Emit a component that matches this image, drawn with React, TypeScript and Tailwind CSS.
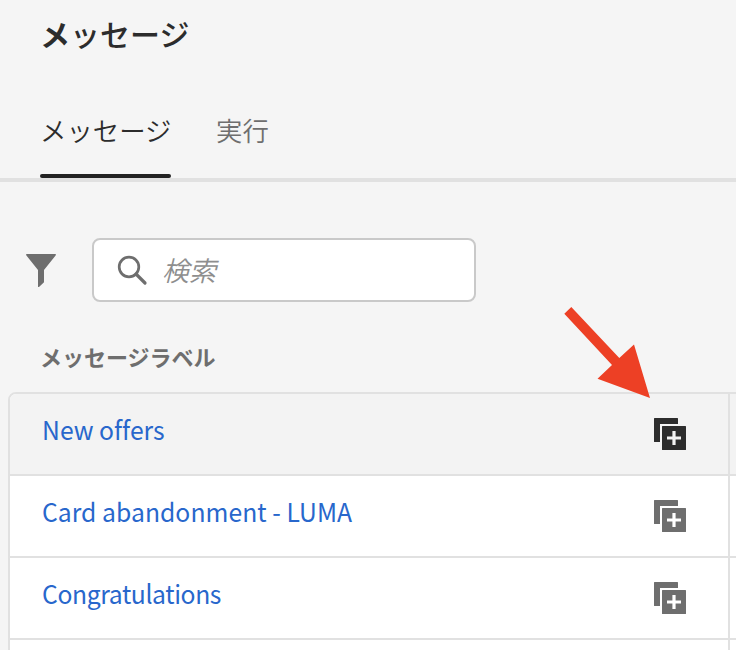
import React from "react";

const rows = [
  { label: "New offers", active: true, spacing: "tracking-[0.02px]" },
  { label: "Card abandonment - LUMA", active: false, spacing: "tracking-[0.05px]" },
  { label: "Congratulations", active: false, spacing: "tracking-[-0.4px]" },
];

function DuplicateIcon({ className }: { className: string }) {
  return (
    <svg width="32" height="32" viewBox="0 0 32 32" className={className}>
      <path
        fill="currentColor"
        d="M.6 0H23.4Q24 0 24 .6V6H6V24H.6Q0 24 0 23.4V.6Q0 0 .6 0Z"
      />
      <path
        fill="currentColor"
        fillRule="evenodd"
        d="M8.6 8H31.4Q32 8 32 8.6V31.4Q32 32 31.4 32H8.6Q8 32 8 31.4V8.6Q8 8 8.6 8ZM18.4 13V18.4H13V21.6H18.4V27H21.6V21.6H27V18.4H21.6V13Z"
      />
    </svg>
  );
}

export default function App() {
  return (
    <div className="relative flex h-[650px] w-[736px] flex-col overflow-hidden bg-[#f5f5f5] font-['Noto_Sans_CJK_JP',sans-serif]">
      <header className="flex h-[182px] shrink-0 flex-col border-b-4 border-[#e1e1e1] pl-10">
        <h1 className="mt-[14px] h-[38px] text-[30px] leading-[38px] font-bold text-[#2c2c2c]">
          メ<span className="font-medium">ッセージ</span>
        </h1>
        <nav className="mt-[58px] flex gap-[45px] text-[26.4px] leading-[40px] font-[350]">
          <div className="flex h-[68px] w-[131px] flex-col justify-between whitespace-nowrap text-[#2c2c2c]">
            メッセージ
            <span className="h-1 rounded-full bg-[#222]" />
          </div>
          <div className="text-[#6e6e6e]">実行</div>
        </nav>
      </header>

      <div className="mt-14 flex h-16 shrink-0 pl-[26px]">
        <svg width="30" height="34" viewBox="0 0 30 34" className="mt-4 text-[#6e6e6e]">
          <path
            fill="currentColor"
            d="M.5 0H29.5Q30.2.6 29.6 1.4L18 16V28.2L13 33Q12 33.2 12 32.4V16L.4 1.4Q-.2.6.5 0Z"
          />
        </svg>
        <div className="ml-9 flex w-[384px] items-center rounded-lg border-2 border-[#c9c9c9] bg-white pl-[23px]">
          <svg width="32" height="32" viewBox="0 0 32 32" fill="none" stroke="#6e6e6e">
            <circle cx="12" cy="13" r="9.8" strokeWidth="2.7" />
            <path d="M19 20L28 29" strokeWidth="3.2" strokeLinecap="round" />
          </svg>
          <span className="ml-[13px] text-[27px] leading-10 font-[350] text-[#8e8e8e] italic">検索</span>
        </div>
      </div>

      <h2 className="mt-[38px] h-[32px] shrink-0 pl-10 text-[22px] leading-[32px] font-bold text-[#6e6e6e]">
        メッセージラベル
      </h2>

      <div className="mt-[20px] ml-2 h-[300px] w-[760px] shrink-0 overflow-hidden rounded-tl-lg border-2 border-[#e1e1e1] bg-white">
        {rows.map((row) => (
          <div
            key={row.label}
            className={`flex h-[82px] border-b-2 border-[#e1e1e1] ${row.active ? "bg-[#f3f3f3]" : "bg-white"}`}
          >
            <div className="flex w-[720px] shrink-0 justify-between border-r-2 border-[#e1e1e1] pr-[42px] pl-8">
              <a className={`mt-[15px] origin-left scale-x-95 text-[26px] leading-[40px] whitespace-nowrap text-[#2867cc] ${row.spacing}`}>
                {row.label}
              </a>
              <DuplicateIcon className={`mt-6 ${row.active ? "text-[#2c2c2c]" : "text-[#6e6e6e]"}`} />
            </div>
          </div>
        ))}
        <div className="h-[52px] w-[720px] border-r-2 border-[#e1e1e1]" />
      </div>

      <svg
        width="90"
        height="94"
        viewBox="0 0 90 94"
        className="absolute top-[305px] left-[562px]"
      >
        <path fill="#ed4025" d="M9.3 2L57.3 53L72 39.5L88 93L35.5 73.8L50 60L2.3 8.7Z" />
      </svg>
    </div>
  );
}
